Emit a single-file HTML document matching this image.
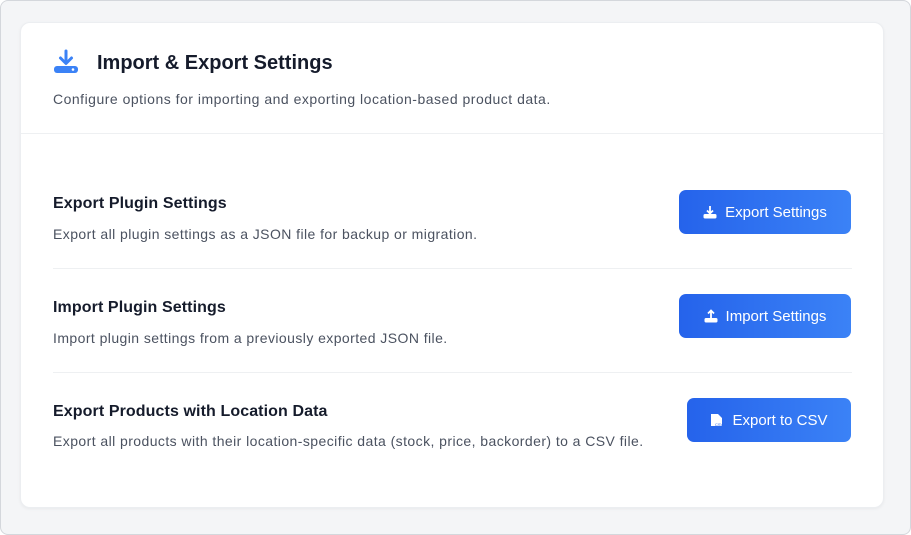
<!DOCTYPE html>
<html><head><style>
*{box-sizing:border-box;margin:0;padding:0}
body{width:911px;height:535px;background:#fff;font-family:"Liberation Sans",sans-serif;overflow:hidden}
.outer{position:absolute;left:0;top:0;width:911px;height:535px;border:1px solid #d4d7dc;border-radius:8px;background:#f4f5f7}
.card{position:absolute;left:20px;top:22px;width:864px;height:486px;background:#fff;border:1px solid #eceef1;border-radius:10px;box-shadow:0 1px 3px rgba(0,0,0,.05)}
.hdr{height:111px;border-bottom:1px solid #eef0f2;position:relative}
.hdr h1{position:absolute;left:76px;top:29px;font-size:20px;font-weight:bold;color:#151b2b}
.hdr p{position:absolute;left:32px;top:68px;font-size:14px;color:#4b5260;letter-spacing:.5px}
.hdr svg{position:absolute;left:32px;top:26px}
.row{position:absolute;left:32px;width:799px}
.row h2{position:absolute;left:0;font-size:16px;font-weight:bold;color:#151b2b;letter-spacing:.1px}
.row p{position:absolute;left:0;font-size:14px;color:#4b5260;letter-spacing:.43px}
.btn{position:absolute;height:44px;border-radius:7px;background:linear-gradient(90deg,#2563eb,#3b82f6);color:#fff;font-size:15px;display:flex;align-items:center;justify-content:center;gap:8px}
.sep{position:absolute;left:32px;width:799px;height:1px;background:#eef0f2}
</style></head><body>
<div class="outer"></div>
<div class="card">
<div class="hdr">
<svg width="26" height="26" viewBox="0 0 26 26"><path d="M13 2v12M7.5 9l5.5 5.5L18.5 9" stroke="#3b82f6" stroke-width="3" fill="none" stroke-linecap="round" stroke-linejoin="round"/><rect x="1" y="17" width="24" height="7" rx="3" fill="#3b82f6"/><circle cx="20" cy="20.5" r="1.3" fill="#fff"/></svg>
<h1>Import &amp; Export Settings</h1>
<p>Configure options for importing and exporting location-based product data.</p>
</div>
</div>
<div class="row" style="top:0"><h2 style="top:195px;left:21px">Export Plugin Settings</h2><p style="top:226px;left:21px">Export all plugin settings as a JSON file for backup or migration.</p></div>
<div class="sep" style="top:268px;left:53px"></div>
<div class="row" style="top:0"><h2 style="top:299px;left:21px">Import Plugin Settings</h2><p style="top:330px;left:21px">Import plugin settings from a previously exported JSON file.</p></div>
<div class="sep" style="top:372px;left:53px"></div>
<div class="row" style="top:0"><h2 style="top:403px;left:21px">Export Products with Location Data</h2><p style="top:433px;left:21px">Export all products with their location-specific data (stock, price, backorder) to a CSV file.</p></div>
<div class="btn" style="left:679px;top:190px;width:172px"><svg width="14" height="14" viewBox="0 0 14 14"><path d="M7 1v7M4 5.5L7 8.5 10 5.5" stroke="#fff" stroke-width="1.8" fill="none"/><rect x="0.5" y="9" width="13" height="4.5" rx="1.5" fill="#fff"/></svg>Export Settings</div>
<div class="btn" style="left:679px;top:294px;width:172px"><svg width="14" height="14" viewBox="0 0 14 14"><path d="M7 9V2M4 4.5L7 1.5 10 4.5" stroke="#fff" stroke-width="1.8" fill="none"/><rect x="0.5" y="9" width="13" height="4.5" rx="1.5" fill="#fff"/></svg>Import Settings</div>
<div class="btn" style="left:687px;top:398px;width:164px"><svg width="14" height="14" viewBox="0 0 14 14"><path d="M1 1h7l4 4v8H1z" fill="#fff"/><text x="5" y="13" font-size="4" fill="#2563eb" font-family="Liberation Sans">CSV</text></svg>Export to CSV</div>
</body></html>
